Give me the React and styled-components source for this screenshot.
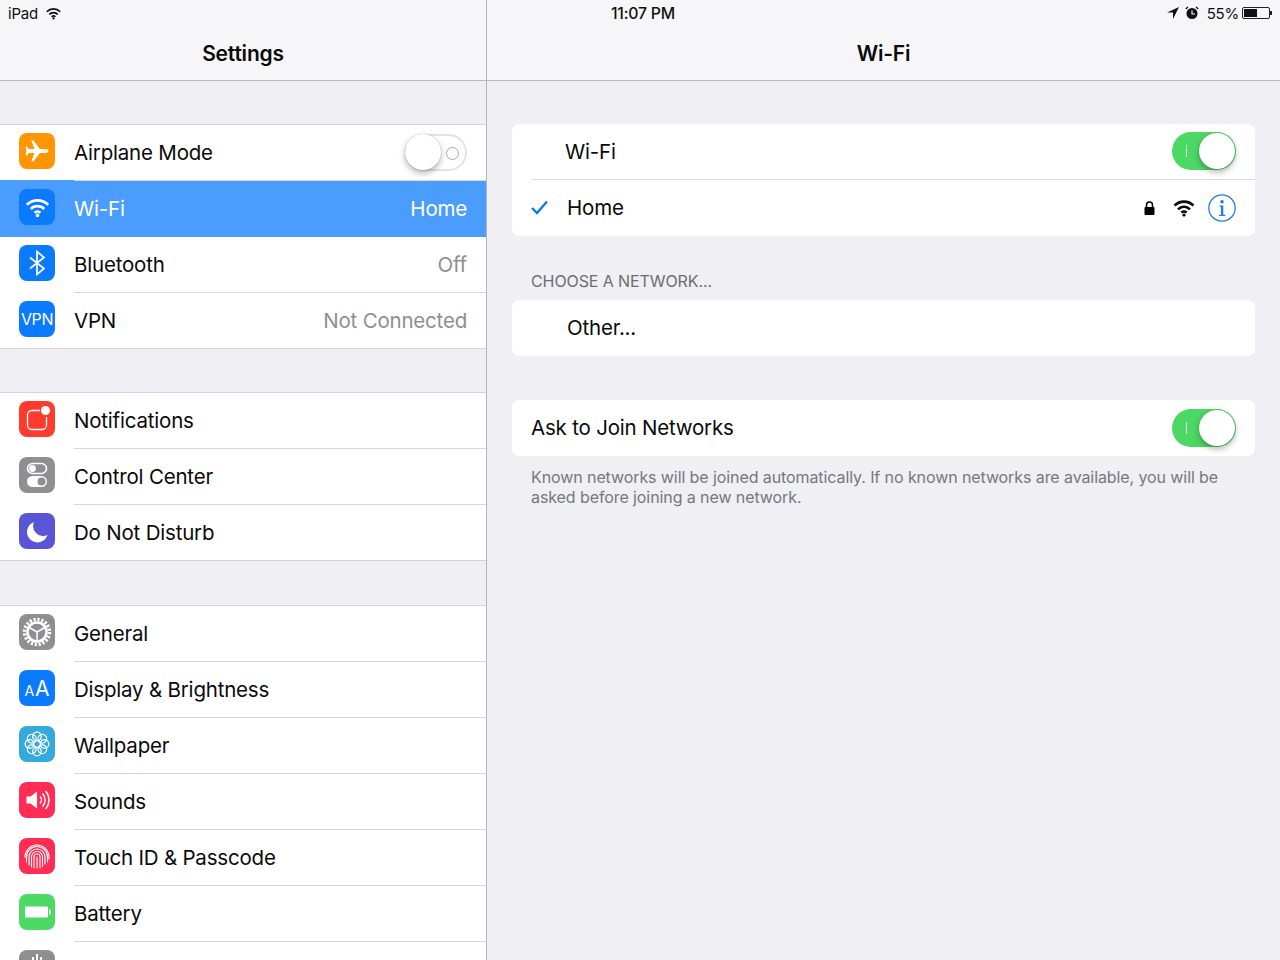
import React from "react"
import styled, { createGlobalStyle } from "styled-components"

const Global = createGlobalStyle`
  html, body {
    margin: 0;
    padding: 0;
    height: 100%;
    background: #efeff4;
    font-family: Inter, "Liberation Sans", sans-serif;
    color: #0a0a0a;
  }
`

const Screen = styled.div`
  position: relative;
  display: flex;
  width: 1280px;
  height: 960px;
  overflow: hidden;
  background: #efeff4;
`
const StatusBar = styled.div`
  position: absolute;
  top: 0;
  left: 0;
  right: 0;
  height: 26px;
  display: grid;
  grid-template-columns: 1fr auto 1fr;
  align-items: center;
  padding: 0 7px 0 8px;
  font-size: 15px;
  letter-spacing: -0.2px;
  color: #111;
`
const StatusLeft = styled.div`
  display: flex;
  align-items: center;
  gap: 7px;
`
const StatusTime = styled.div`
  font-size: 15.8px;
  font-weight: 500;
  margin-left: 5px;
`
const StatusRight = styled.div`
  display: flex;
  align-items: center;
  justify-content: flex-end;
  gap: 8px;
`
const Sidebar = styled.aside`
  width: 486px;
  flex: none;
  border-right: 1px solid #b4b4b8;
`
const Detail = styled.main`
  flex: 1;
  min-width: 0;
`
const NavBar = styled.header`
  height: 81px;
  box-sizing: border-box;
  padding-top: 26px;
  display: flex;
  align-items: center;
  justify-content: center;
  background: #f6f6f8;
  border-bottom: 1px solid #b9b9bc;
  font-size: 21px;
  font-weight: 600;
  letter-spacing: -0.2px;
`
const Group = styled.section`
  margin-top: ${p => p.$top}px;
  background: #fff;
  border-top: 1px solid #d4d4d8;
  border-bottom: 1px solid #d4d4d8;
  & > *:last-child {
    height: 55px;
  }
  & > *:last-child > div:last-child {
    border-bottom: none;
  }
`
const Row = styled.div`
  display: flex;
  align-items: center;
  height: 56px;
  padding-left: 19px;
  background: ${p => (p.$active ? "#4a9dfd" : "transparent")};
  box-shadow: ${p => (p.$active ? "0 -1px 0 #4a9dfd" : "none")};
  color: ${p => (p.$active ? "#fff" : "inherit")};
`
const IconTile = styled.span`
  width: 36px;
  height: 36px;
  flex: none;
  margin: 0 19px 4px 0;
  display: flex;
  align-items: center;
  justify-content: center;
  border-radius: 8px;
  background: ${p => p.$bg};
  color: #fff;
  svg {
    display: block;
  }
`
const RowBody = styled.div`
  flex: 1;
  height: 100%;
  box-sizing: border-box;
  padding: 0 19px 1px 0;
  display: flex;
  align-items: center;
  justify-content: space-between;
  border-bottom: 1px solid ${p => (p.$active ? "transparent" : "#d8d8dc")};
  font-size: 20.5px;
  letter-spacing: -0.2px;
`
const RowValue = styled.span`
  color: ${p => (p.$active ? "#fff" : "#8e8e93")};
`
const Content = styled.div`
  padding: 43px 25px 0;
`
const Card = styled.section`
  background: #fff;
  border-radius: 7px;
  overflow: hidden;
  margin-bottom: ${p => p.$bottom || 0}px;
`
const CardRow = styled.div`
  display: flex;
  align-items: center;
  height: 56px;
  margin-left: 19px;
  padding: 0 19px 1px ${p => p.$indent || 0}px;
  font-size: 20.5px;
  letter-spacing: -0.2px;
  box-sizing: border-box;
  border-bottom: ${p => (p.$line ? "1px solid #d8d8dc" : "none")};
`
const RowLabel = styled.span`
  flex: 1;
`
const Check = styled.span`
  width: 36px;
  flex: none;
  display: flex;
`
const SectionLabel = styled.div`
  margin: 0 0 9px 19px;
  padding-top: 35px;
  font-size: 16px;
  line-height: 20px;
  letter-spacing: -0.1px;
  color: #6d6d72;
`
const Footnote = styled.p`
  margin: 11px 19px 0;
  font-size: 16px;
  line-height: 20px;
  letter-spacing: -0.09px;
  color: #77777c;
`
const ToggleTrack = styled.span`
  position: relative;
  width: ${p => (p.$on ? 64 : 62)}px;
  height: ${p => (p.$on ? 38 : 37)}px;
  flex: none;
  box-sizing: border-box;
  border-radius: 20px;
  background: ${p => (p.$on ? "#4cd864" : "#fff")};
  border: ${p => (p.$on ? "none" : "2px solid #e4e4e6")};
`
const ToggleKnob = styled.span`
  position: absolute;
  top: ${p => (p.$on ? 1 : -2)}px;
  ${p => (p.$on ? "right: 1px;" : "left: -2px;")}
  width: 36px;
  height: 36px;
  border-radius: 50%;
  background: #fff;
  box-shadow: 0 3px 6px rgba(0, 0, 0, 0.3), 0 0 1px rgba(0, 0, 0, 0.3);
`
const ToggleOnMark = styled.span`
  position: absolute;
  left: 14px;
  top: 13px;
  width: 1px;
  height: 12px;
  background: rgba(255, 255, 255, 0.8);
`
const ToggleOffMark = styled.span`
  position: absolute;
  right: 6px;
  top: 11px;
  width: 13px;
  height: 13px;
  box-sizing: border-box;
  border-radius: 50%;
  border: 1.5px solid #a8a8ac;
`
const StatusIcons = styled.div`
  display: flex;
  align-items: center;
  gap: 17px;
  margin-right: 12px;
`
const Battery = styled.span`
  position: relative;
  width: 28px;
  height: 12px;
  box-sizing: border-box;
  border: 1px solid #222;
  border-radius: 2px;
  padding: 1px;
  margin: 0 3px 0 -5px;
  &::after {
    content: "";
    position: absolute;
    right: -3px;
    top: 3px;
    width: 2px;
    height: 4px;
    background: #222;
  }
`
const BatteryFill = styled.span`
  display: block;
  height: 100%;
  background: #111;
`
const LocationSlot = styled.span`
  display: flex;
  margin-right: -2px;
`
const VpnText = styled.span`
  font-size: 16px;
  letter-spacing: -0.4px;
`
const AaText = styled.span`
  display: flex;
  align-items: baseline;
  gap: 1px;
  font-size: 21px;
  letter-spacing: 0;
  small {
    font-size: 14px;
  }
`

const WifiIcon = ({ size = 24, stroke = 2.8 }) => (
  <svg width={size} height={size} viewBox="0 0 24 24" fill="none" stroke="currentColor" strokeWidth={stroke} strokeLinecap="butt">
    <path d="M2.5 9.5 a13.5 13.5 0 0 1 19 0" />
    <path d="M6 13.3 a8.5 8.5 0 0 1 12 0" />
    <path d="M9.4 16.7 a3.7 3.7 0 0 1 5.2 0" fill="none" />
    <circle cx="12" cy="19" r="1.6" fill="currentColor" stroke="none" />
  </svg>
)

const PlaneIcon = () => (
  <svg width="36" height="36" viewBox="0 0 36 36" fill="currentColor">
    <path d="M29.500 18c0-1.100-1.500-1.900-3-1.900h-5.700L14.500 7.500h-2.200l3.100 8.600H9.800L7.800 13.600H6.500l1 4.400-1 4.400h1.300l2-2.500h5.600l-3.100 8.600h2.200l6.300-8.600h5.700c1.500 0 3-.8 3-1.900z" />
  </svg>
)

const BluetoothIcon = () => (
  <svg width="26" height="30" viewBox="0 0 26 30" fill="none" stroke="currentColor" strokeWidth="1.7">
    <path d="M6 9.500l14 11-7 6V3.500l7 6L6 20.500" />
  </svg>
)

const BellTile = () => (
  <svg width="36" height="36" viewBox="0 0 36 36" fill="none">
    <path d="M21 9.500H13a4.500 4.500 0 0 0-4.500 4.500v10a4.500 4.500 0 0 0 4.500 4.500h10a4.500 4.500 0 0 0 4.500-4.500v-8" stroke="#fff" strokeWidth="1.300" />
    <circle cx="26.500" cy="9.500" r="4.500" fill="#fff" />
  </svg>
)

const SwitchesIcon = () => (
  <svg width="36" height="36" viewBox="0 0 36 36">
    <rect x="8.500" y="6.500" width="19" height="10" rx="5" fill="none" stroke="#fff" strokeWidth="1.600" />
    <circle cx="13.500" cy="11.500" r="3.400" fill="#fff" />
    <rect x="8" y="19" width="20" height="11" rx="5.500" fill="#fff" />
    <circle cx="22.500" cy="24.500" r="4" fill="#8e8e93" />
  </svg>
)

const MoonIcon = () => (
  <svg width="36" height="36" viewBox="0 0 36 36" fill="#fff">
    <path d="M15 9a10.500 10.500 0 1 0 13.500 13 10 10 0 0 1-13.500-13z" />
  </svg>
)

const GearIcon = () => (
  <svg width="36" height="36" viewBox="0 0 36 36" fill="none" stroke="#fff">
    <circle cx="18" cy="18" r="12.500" strokeWidth="3.500" strokeDasharray="2.200 1.727" />
    <circle cx="18" cy="18" r="9.500" strokeWidth="2.600" />
    <path d="M18 18v9M18 18l-7.800-4.500M18 18l7.800-4.500" strokeWidth="1.500" />
  </svg>
)

const FlowerIcon = () => (
  <svg width="36" height="36" viewBox="0 0 36 36" fill="none" stroke="#fff" strokeWidth="1.300">
    {[0, 45, 90, 135, 180, 225, 270, 315].map(angle => (
      <circle key={angle} cx="18" cy="10.500" r="4.300" transform={`rotate(${angle} 18 18)`} />
    ))}
    <circle cx="18" cy="18" r="3.600" />
  </svg>
)

const SpeakerIcon = () => (
  <svg width="36" height="36" viewBox="0 0 36 36" fill="none" stroke="#fff" strokeWidth="1.500">
    <path d="M7.500 14.500h4l6.500-5v17l-6.500-5h-4z" fill="#fff" stroke="none" />
    <path d="M21 14.500a5 5 0 0 1 0 7" />
    <path d="M23.500 11.500a9.500 9.500 0 0 1 0 13" />
    <path d="M26.500 9a13.500 13.500 0 0 1 0 18" />
  </svg>
)

const FingerprintIcon = () => (
  <svg width="36" height="36" viewBox="0 0 36 36" fill="none" stroke="#fff" strokeWidth="1.100" strokeLinecap="round">
    <path d="M6 19a12 12 0 0 1 24 0v2" />
    <path d="M7.500 24v-5a10.500 10.500 0 0 1 21 0v5" />
    <path d="M10 27v-8a8 8 0 0 1 16 0v7" />
    <path d="M12.500 29V19a5.500 5.500 0 0 1 11 0v9.500" />
    <path d="M15 30V19a3 3 0 0 1 6 0v11" />
    <path d="M18 19v11" />
  </svg>
)

const BatteryIcon = () => (
  <svg width="36" height="36" viewBox="0 0 36 36" fill="#fff">
    <rect x="6" y="12.500" width="23" height="11" rx="1" />
    <rect x="30" y="15.500" width="1.500" height="5" />
  </svg>
)

const BarsIcon = () => (
  <svg width="36" height="36" viewBox="0 0 36 36" fill="#fff">
    <rect x="13" y="7" width="2" height="8" />
    <rect x="17" y="4" width="2" height="11" />
    <rect x="21" y="7" width="2" height="8" />
  </svg>
)

const LockIcon = () => (
  <svg width="11" height="14" viewBox="0 0 11 14">
    <path d="M2.500 6V4a3 3 0 0 1 6 0v2" fill="none" stroke="#000" strokeWidth="1.500" />
    <rect x="0.500" y="6" width="10" height="8" rx="1" fill="#000" />
  </svg>
)

const InfoIcon = () => (
  <svg width="28" height="28" viewBox="0 0 28 28" fill="none">
    <circle cx="14" cy="14" r="13.200" stroke="#1a7fe8" strokeWidth="1.300" />
    <circle cx="14" cy="7.700" r="1.800" fill="#1a7fe8" />
    <path d="M11.500 11.500h3.800v9.200h2v1.300h-6.300v-1.300h2v-7.900h-1.500z" fill="#1a7fe8" />
  </svg>
)

const CheckIcon = () => (
  <svg width="17" height="15" viewBox="0 0 17 15" fill="none" stroke="#0f7bea" strokeWidth="2.400">
    <path d="M1 8l5 5L16 1.500" />
  </svg>
)

const LocationIcon = () => (
  <svg width="12" height="12" viewBox="0 0 12 12" fill="#111">
    <path d="M12 0L0 5.500h6V12z" />
  </svg>
)

const AlarmIcon = () => (
  <svg width="14" height="14" viewBox="0 0 14 14">
    <circle cx="7" cy="7.500" r="5.500" fill="#111" />
    <path d="M7 4.500v3.500h3" fill="none" stroke="#fff" strokeWidth="1.100" />
    <path d="M0.800 3L3 1M13.200 3L11 1" stroke="#111" strokeWidth="1.300" />
  </svg>
)

const Toggle = ({ on }) => (
  <ToggleTrack $on={on}>
    {on ? <ToggleOnMark /> : <ToggleOffMark />}
    <ToggleKnob $on={on} />
  </ToggleTrack>
)

const SettingsRow = ({ bg, icon, label, value, active, children }) => (
  <Row $active={active}>
    <IconTile $bg={bg}>{icon}</IconTile>
    <RowBody $active={active}>
      <span>{label}</span>
      {value && <RowValue $active={active}>{value}</RowValue>}
      {children}
    </RowBody>
  </Row>
)

export default function App() {
  return (
    <Screen>
      <Global />
      <Sidebar>
        <NavBar>Settings</NavBar>
        <Group $top={43}>
          <SettingsRow bg="#ff9500" icon={<PlaneIcon />} label="Airplane Mode">
            <Toggle />
          </SettingsRow>
          <SettingsRow bg="#0a7aff" icon={<WifiIcon size={27} stroke={2.400} />} label="Wi-Fi" value="Home" active />
          <SettingsRow bg="#0a7aff" icon={<BluetoothIcon />} label="Bluetooth" value="Off" />
          <SettingsRow bg="#0a7aff" icon={<VpnText>VPN</VpnText>} label="VPN" value="Not Connected" />
        </Group>
        <Group $top={43}>
          <SettingsRow bg="#ff3b30" icon={<BellTile />} label="Notifications" />
          <SettingsRow bg="#8e8e93" icon={<SwitchesIcon />} label="Control Center" />
          <SettingsRow bg="#5856d6" icon={<MoonIcon />} label="Do Not Disturb" />
        </Group>
        <Group $top={44}>
          <SettingsRow bg="#8e8e93" icon={<GearIcon />} label="General" />
          <SettingsRow bg="#0a7aff" icon={<AaText><small>A</small>A</AaText>} label="Display & Brightness" />
          <SettingsRow bg="#34aadc" icon={<FlowerIcon />} label="Wallpaper" />
          <SettingsRow bg="#ff2d55" icon={<SpeakerIcon />} label="Sounds" />
          <SettingsRow bg="#ff2d55" icon={<FingerprintIcon />} label="Touch ID & Passcode" />
          <SettingsRow bg="#4cd964" icon={<BatteryIcon />} label="Battery" />
          <SettingsRow bg="#8e8e93" icon={<BarsIcon />} />
        </Group>
      </Sidebar>
      <Detail>
        <NavBar>Wi-Fi</NavBar>
        <Content>
          <Card>
            <CardRow $line $indent={34}>
              <RowLabel>Wi-Fi</RowLabel>
              <Toggle on />
            </CardRow>
            <CardRow>
              <Check><CheckIcon /></Check>
              <RowLabel>Home</RowLabel>
              <StatusIcons>
                <LockIcon />
                <WifiIcon size={24} stroke={2.600} />
              </StatusIcons>
              <InfoIcon />
            </CardRow>
          </Card>
          <SectionLabel>CHOOSE A NETWORK...</SectionLabel>
          <Card $bottom={44}>
            <CardRow $indent={36}>Other...</CardRow>
          </Card>
          <Card>
            <CardRow>
              <RowLabel>Ask to Join Networks</RowLabel>
              <Toggle on />
            </CardRow>
          </Card>
          <Footnote>
            Known networks will be joined automatically. If no known networks are available, you will be asked before joining a new network.
          </Footnote>
        </Content>
      </Detail>
      <StatusBar>
        <StatusLeft>
          iPad
          <WifiIcon size={17} stroke={2.400} />
        </StatusLeft>
        <StatusTime>11:07 PM</StatusTime>
        <StatusRight>
          <LocationSlot><LocationIcon /></LocationSlot>
          <AlarmIcon />
          55%
          <Battery>
            <BatteryFill style={{ width: "55%" }} />
          </Battery>
        </StatusRight>
      </StatusBar>
    </Screen>
  )
}
